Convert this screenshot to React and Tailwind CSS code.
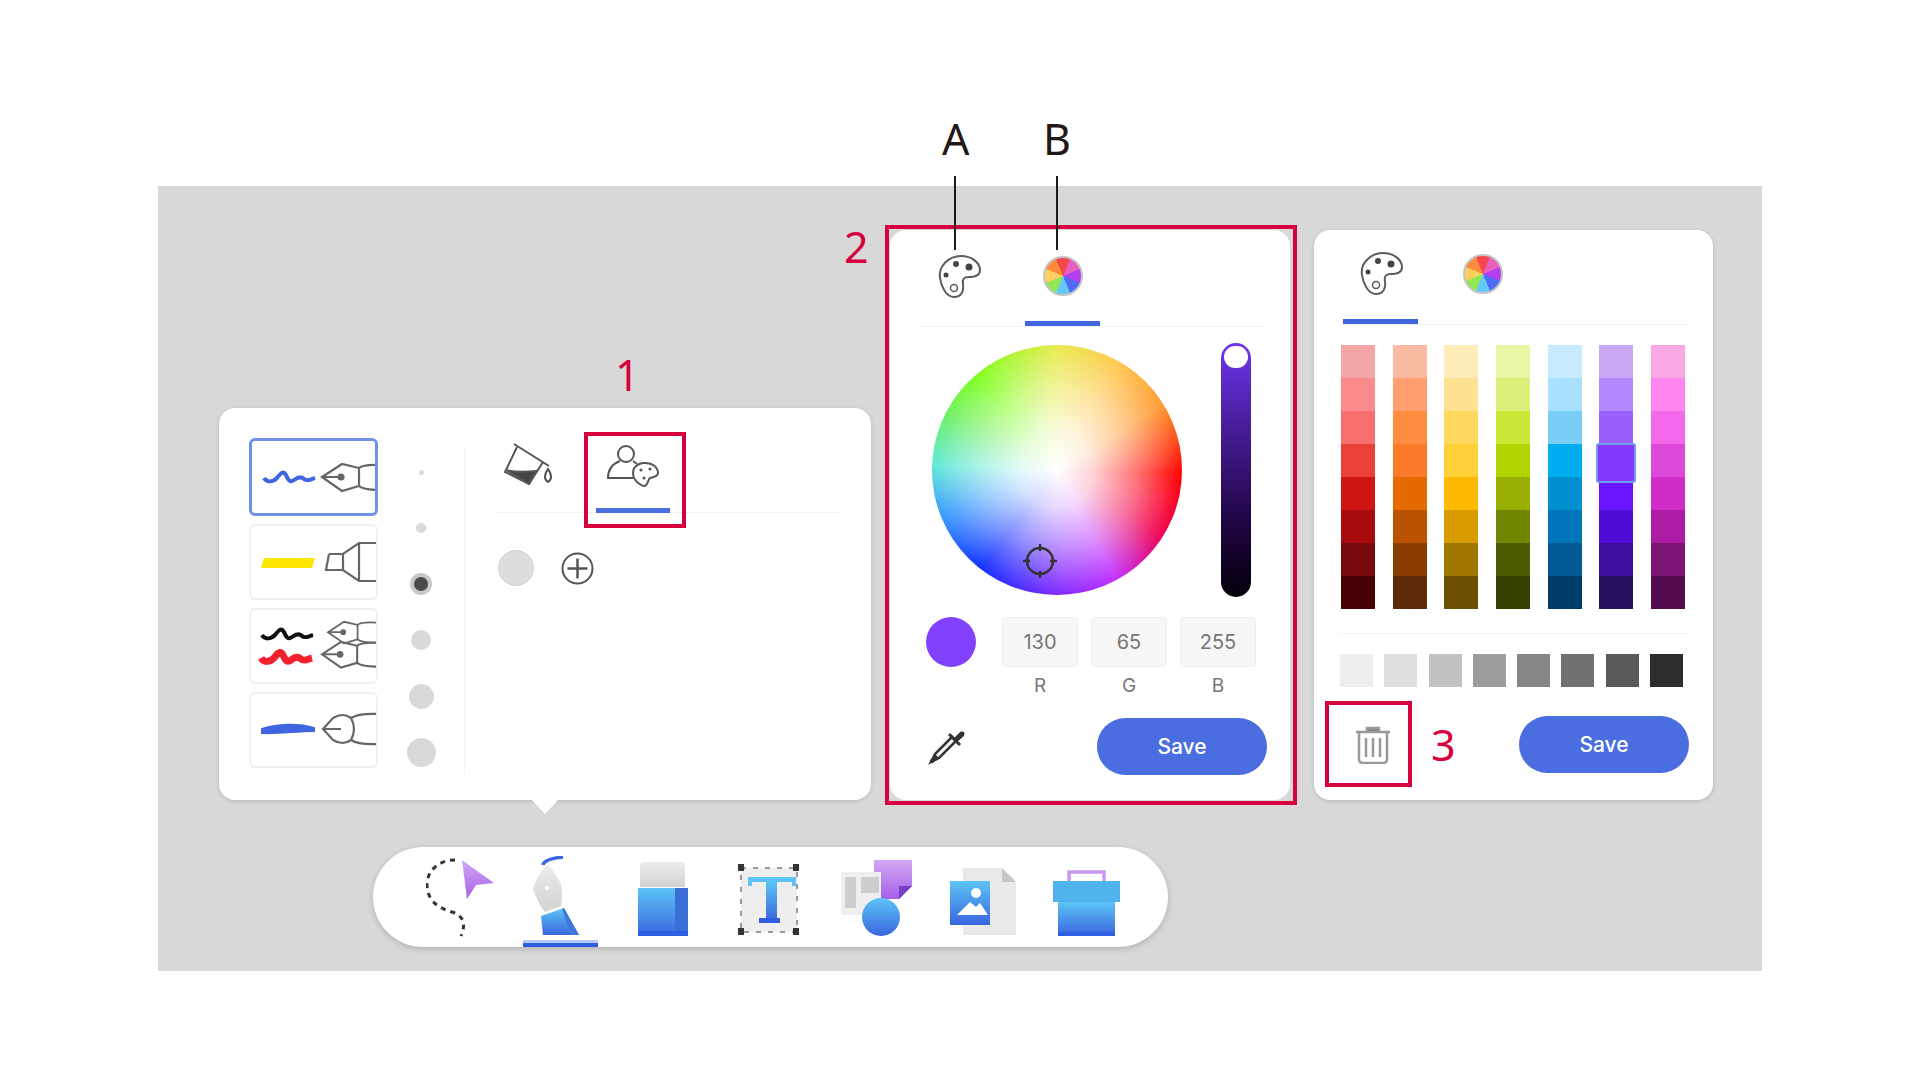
const swatches = [
  ['#f4a6a6', '#fb8a8a', '#f76f6f', '#ea4136', '#d01515', '#a80b0b', '#780a0e', '#470003'],
  ['#fbbba2', '#ff9f70', '#ff8c3f', '#fb7a2a', '#e56a00', '#bb5200', '#8a3c00', '#5f2a08'],
  ['#fdecb8', '#fee191', '#ffd860', '#ffd038', '#ffb900', '#d89c00', '#9f7700', '#6c5000'],
  ['#e8f7a3', '#dcef7a', '#cbe634', '#b2d400', '#98ae00', '#708600', '#4d5c00', '#343f00'],
  ['#c6ebff', '#a8e0ff', '#79cdf7', '#00adf0', '#0090d0', '#0074b8', '#005b94', '#003c68'],
  ['#c8a8f4', '#b388fc', '#9a60fc', '#8438fc', '#6a14ff', '#4f0cd8', '#3d0f9c', '#26105f'],
  ['#fba8e6', '#ff86f0', '#f468ec', '#dc48d8', '#d02cc8', '#ac1ca4', '#7c1474', '#540c50'],
];
const grays = ['#ededed', '#dfdfdf', '#c2c2c2', '#9d9d9d', '#868686', '#717171', '#5a5a5a', '#2d2d2d'];
const WAVE = 'M1 8 C4 13 10 12 14 8 C17 4 20 0 23 5 C25 10 27 13 31 10 C35 7 38 6 41 9 C44 12 48 9 52 8';

function Nib({ x = 0, y = 0, s = 1 }) {
  return (
    <g transform={`translate(${x} ${y}) scale(${s})`} fill="none" stroke="#666" strokeWidth="2.2">
      <path d="M0 14 L20 1 L37 5 V23 L20 28 Z" />
      <path d="M37 5 Q41 1 60 2 M37 23 Q41 27 60 27" />
      <path d="M0 14 H19" />
      <circle cx="19" cy="14" r="2.5" fill="#666" />
    </g>
  );
}

function PenCard({ selected, children }) {
  return (
    <div className={selected
      ? 'h-[78px] w-[129px] overflow-hidden rounded-md border-[3px] border-[#7090ec] bg-white'
      : 'h-[76px] w-[129px] overflow-hidden rounded-md border-2 border-[#f0f0f0] bg-white'}>
      {children}
    </div>
  );
}

function PaletteIcon() {
  return (
    <svg className="h-[44px] w-[44px]" viewBox="0 0 44 44" fill="none" stroke="#5c5c5c" strokeWidth="2">
      <path d="M3 24 C1 12 12 2 24 2 C35 2 43 9 43 16 C43 22 38 23 32 23 C27 23 25 25 26 30 C27 38 24 43 17 43 C9 43 4 32 3 24 Z" />
      <circle cx="19" cy="10" r="3" fill="#444" stroke="none" />
      <circle cx="32" cy="13" r="3.5" fill="#444" stroke="none" />
      <circle cx="9" cy="21" r="2.5" fill="#444" stroke="none" />
      <circle cx="17" cy="34" r="3.5" strokeWidth="1.5" />
    </svg>
  );
}

function WheelIcon() {
  return (
    <div className="h-[40px] w-[40px] rounded-full border-2 border-[#c4c4c4] bg-[image:conic-gradient(from_-22.5deg,#f4484c_0deg_45deg,#e85fc0_45deg_90deg,#b43ff0_90deg_135deg,#4f6cf5_135deg_180deg,#65c8f8_180deg_225deg,#90e850_225deg_270deg,#fcd060_270deg_315deg,#fc8a3c_315deg_360deg)]" />
  );
}

function SaveButton() {
  return (
    <button className="h-[57px] w-[170px] rounded-full bg-[#4a6ee0] font-['Inter',sans-serif] text-[21px] font-medium text-white">
      Save
    </button>
  );
}

function Rgb({ value, label }) {
  return (
    <div className="flex w-[76px] flex-col items-center">
      <div className="flex h-[50px] w-full items-center justify-center rounded-[4px] border border-[#eeeeee] bg-[#f6f6f6] font-['Inter',sans-serif] text-[20px] text-[#777777]">
        {value}
      </div>
      <span className="mt-[8px] font-['Inter',sans-serif] text-[19px] leading-[22px] text-[#777777]">{label}</span>
    </div>
  );
}

function Grad({ id, from, to }) {
  return (
    <linearGradient id={id} x1="0" y1="0" x2="0" y2="1">
      <stop offset="0" stopColor={from} />
      <stop offset="1" stopColor={to} />
    </linearGradient>
  );
}

function Toolbar() {
  return (
    <div className="relative ml-[154px] mt-[47px] flex h-[100px] w-[795px] shrink-0 items-start rounded-full bg-white pl-[53px] pt-[9px] shadow-[0_2px_6px_rgba(0,0,0,0.18)]">
      {/* lasso */}
      <svg className="h-[82px] w-[68px]" viewBox="0 0 68 82">
        <defs>
          <Grad id="purple" from="#d2a8f4" to="#a65fe8" />
          <Grad id="blue" from="#5cc4f5" to="#3a66e0" />
          <Grad id="gray" from="#ececec" to="#d2d2d2" />
        </defs>
        <path d="M29 4 C10 4 0 18 1 30 C2 45 12 52 26 56 C38 60 40 68 35 80" fill="none" stroke="#333" strokeWidth="3" strokeDasharray="5 5" />
        <path d="M36 4 L68 27 L50 29 L41 43 Z" fill="url(#purple)" />
      </svg>
      {/* pen */}
      <svg className="ml-[39px] h-[82px] w-[46px]" viewBox="0 0 46 82">
        <path d="M10 9 Q11 3 30 1" fill="none" stroke="#3a66e0" strokeWidth="3.5" />
        <path d="M14 8 Q4 20 0 32 Q4 46 12 56 L28 50 Q30 38 28 28 Q22 16 14 8 Z" fill="url(#gray)" />
        <circle cx="14" cy="32" r="2" fill="#fff" />
        <path d="M8 60 L31 52 L46 79 H10 Z" fill="url(#blue)" />
        <path d="M31 52 L46 79 H38 L29 53 Z" fill="#3f77dc" />
      </svg>
      {/* eraser */}
      <svg className="ml-[59px] h-[82px] w-[50px]" viewBox="0 0 50 82">
        <path d="M2 10 Q2 6 6 6 H43 Q47 6 47 10 V31 H2 Z" fill="url(#gray)" />
        <rect x="0" y="32" width="50" height="48" fill="url(#blue)" />
        <rect x="37" y="32" width="13" height="48" fill="#3a6fd8" />
        <rect x="0" y="75" width="50" height="5" fill="#2f5fe0" />
      </svg>
      {/* text */}
      <svg className="ml-[50px] h-[82px] w-[62px]" viewBox="0 0 62 82">
        <rect x="3" y="12" width="56" height="64" fill="#eeeeee" stroke="#9a9a9a" strokeWidth="2" strokeDasharray="5 7" />
        {[[0, 8], [55, 8], [0, 72], [55, 72]].map(([x, y]) => (
          <rect key={x + '-' + y} x={x} y={y} width="6" height="7" fill="#333" />
        ))}
        <path d="M10 21 H58 V30 H54 V26 H40 V26 H27 V26 H14 V30 H10 Z" fill="#5cc4f5" />
        <rect x="28" y="26" width="11" height="38" fill="url(#blue)" />
        <rect x="21" y="62" width="21" height="5" fill="#2f5fe0" />
      </svg>
      {/* shapes */}
      <svg className="ml-[41px] h-[82px] w-[71px]" viewBox="0 0 71 82">
        <path d="M33 4 H71 V30 L58 43 H33 Z" fill="url(#purple)" />
        <path d="M71 30 L58 43 V30 Z" fill="#7a3fc8" />
        <rect x="0" y="16" width="40" height="43" fill="#efefef" />
        <rect x="4" y="21" width="11" height="31" fill="#cdcdcd" />
        <rect x="20" y="21" width="18" height="16" fill="#cdcdcd" />
        <circle cx="40" cy="61" r="19" fill="url(#blue)" />
      </svg>
      {/* image */}
      <svg className="ml-[38px] h-[82px] w-[66px]" viewBox="0 0 66 82">
        <path d="M13 12 H52 L66 26 V79 H13 Z" fill="#e9e9e9" />
        <path d="M52 12 L66 26 H52 Z" fill="#c6c6c6" />
        <rect x="0" y="25" width="40" height="44" fill="url(#blue)" />
        <circle cx="26" cy="37" r="5" fill="#fff" />
        <path d="M7 59 L20 46 L26 51 L30 47 L38 59 Z" fill="#fff" />
      </svg>
      {/* toolbox */}
      <svg className="ml-[37px] h-[82px] w-[67px]" viewBox="0 0 67 82">
        <path d="M16 26 V16 H51 V26" fill="none" stroke="#c79bf2" strokeWidth="3.5" />
        <rect x="5" y="46" width="57" height="34" fill="url(#blue)" />
        <rect x="5" y="76" width="57" height="4" fill="#2f5fe0" />
        <rect x="0" y="25" width="67" height="21" fill="#4fb2ec" />
      </svg>
      <div className="absolute bottom-0 left-[150px] h-[7px] w-[75px] border-b-[4px] border-[#2f5fe0] bg-[#b9c9f5]" />
    </div>
  );
}

export default function App() {
  return (
    <div className="h-[1081px] w-[1921px] bg-white pl-[158px] pt-[186px] font-['Noto_Sans',sans-serif]">
      <div className="flex h-[785px] w-[1604px] items-start bg-[#d8d8d8] pl-[61px]">
        {/* pen panel + toolbar */}
        <div className="mt-[222px] flex w-[652px] shrink-0 flex-col">
          <div className="relative flex h-[392px] w-[652px] rounded-2xl bg-white shadow-[0_1px_4px_rgba(0,0,0,0.16)]">
            <div className="flex flex-col gap-[8px] pl-[30px] pt-[30px]">
              <PenCard selected>
                <svg className="-ml-[3px] -mt-[3px] h-[78px] w-[129px]" viewBox="0 0 129 78">
                  <path d={WAVE} transform="translate(14 32)" fill="none" stroke="#3f66e0" strokeWidth="4" />
                  <Nib x={73} y={25} />
                </svg>
              </PenCard>
              <PenCard>
                <svg className="-ml-[2px] -mt-[2px] h-[76px] w-[129px]" viewBox="0 0 129 76">
                  <path d="M15 34 H66 L63 44 H12 Z" fill="#ffe600" />
                  <g fill="none" stroke="#666" strokeWidth="2.2">
                    <path d="M80 30 L77 46 H94 L110 57 H129 M80 30 H94 L110 19 H129 M110 19 V57 M94 30 V46" />
                  </g>
                </svg>
              </PenCard>
              <PenCard>
                <svg className="-ml-[2px] -mt-[2px] h-[76px] w-[129px]" viewBox="0 0 129 76">
                  <path d={WAVE} transform="translate(12 19)" fill="none" stroke="#111" strokeWidth="4" />
                  <path d={WAVE} transform="translate(11 42)" fill="none" stroke="#f4202c" strokeWidth="7" />
                  <Nib x={79} y={13} s={0.8} />
                  <Nib x={73} y={33} s={0.95} />
                </svg>
              </PenCard>
              <PenCard>
                <svg className="-ml-[2px] -mt-[2px] h-[76px] w-[129px]" viewBox="0 0 129 76">
                  <path d="M13 37 C28 32 50 31 65 36 L65 39 C48 39 28 42 13 41 Z" fill="#3f66e0" stroke="#3f66e0" strokeWidth="2" />
                  <g fill="none" stroke="#666" strokeWidth="2.2">
                    <path d="M74 37 L84 26 Q94 20 102 26 Q108 37 102 48 Q94 54 84 48 Z" />
                    <path d="M102 26 Q110 21 129 22 M102 48 Q110 53 129 52 M74 37 H92" />
                  </g>
                </svg>
              </PenCard>
            </div>

            {/* sizes */}
            <div className="ml-[13px] flex w-[60px] flex-col pt-[36px]">
              {[5, 10, 0, 20, 25, 29].map((size, i) => (
                <div key={i} className="flex h-[56px] items-center justify-center">
                  {size === 0 ? (
                    <div className="flex h-[22px] w-[22px] items-center justify-center rounded-full bg-[#c8c8c8]">
                      <div className="h-[14px] w-[14px] rounded-full bg-[#4a4a4a]" />
                    </div>
                  ) : (
                    <div className="rounded-full bg-[#d9d9d9]" style={{ width: size, height: size }} />
                  )}
                </div>
              ))}
            </div>

            <div className="ml-[13px] mt-[40px] h-[327px] w-px bg-[#f2f2f2]" />

            <div className="ml-[30px] flex w-[345px] flex-col">
              <div className="flex h-[105px] gap-[33px] border-b border-[#f0f0f0]">
                <div className="flex h-[105px] w-[68px] justify-center pt-[35px]">
                  <svg className="h-[42px] w-[54px]" viewBox="0 0 54 42" fill="none" stroke="#555" strokeWidth="2">
                    <path d="M12 1 L47 23" />
                    <path d="M15 4 L3 29 L27 41 L41 19" />
                    <path d="M4 27 Q16 30 34 28 L27 41 Z" fill="#444" />
                    <path d="M47 26 Q41 35 47 39 Q53 35 47 26 Z" transform="translate(-1 0)" />
                  </svg>
                </div>
                <div className="flex h-[105px] w-[74px] justify-center border-b-[5px] border-[#4a6ee0] pt-[37px]">
                  <svg className="h-[42px] w-[52px]" viewBox="0 0 52 42" fill="none" stroke="#555" strokeWidth="2">
                    <ellipse cx="19" cy="9" rx="8" ry="8" />
                    <path d="M13 16 C5 19 1 24 1 33 H26" />
                    <path d="M26 16 L30 19" />
                    <path d="M30 37 C24 31 24 20 36 18 C46 17 51 23 51 28 C51 32 46 32 43 33 C41 34 41 41 37 41 C34 41 33 39 30 37 Z" />
                    <circle cx="34" cy="25" r="1.6" fill="#555" stroke="none" />
                    <circle cx="43" cy="24" r="1.6" fill="#555" stroke="none" />
                    <circle cx="37" cy="33" r="1.6" fill="#555" stroke="none" />
                  </svg>
                </div>
              </div>
              <div className="ml-[3px] mt-[37px] flex items-center gap-[27px]">
                <div className="h-[36px] w-[36px] rounded-full border border-[#d0d0d0] bg-[#dddddd]" />
                <svg className="h-[33px] w-[33px]" viewBox="0 0 33 33" fill="none" stroke="#555" strokeWidth="2">
                  <circle cx="16.5" cy="16.5" r="15" />
                  <path d="M16.5 6.5 V26.5 M6.5 16.5 H26.5" strokeWidth="2.5" />
                </svg>
              </div>
            </div>

            {/* callout arrow */}
            <div className="absolute -bottom-[14px] left-[312px] h-0 w-0 border-x-[14px] border-t-[15px] border-x-transparent border-t-white" />
            {/* annotation 1 */}
            <div className="absolute left-[365px] top-[24px] h-[96px] w-[102px] border-[4px] border-[#d7003f]" />
            <span className="absolute -top-[55px] left-[396px] text-[43px] leading-none text-[#d7003f]">1</span>
          </div>
          <Toolbar />
        </div>

        {/* colour wheel panel */}
        <div className="relative ml-[19px] mt-[44px] flex h-[570px] w-[400px] shrink-0 flex-col rounded-2xl bg-white">
          <div className="ml-[31px] mr-[23px] flex h-[97px] gap-[29px] border-b border-[#f2f2f2]">
            <div className="flex h-[96px] w-[75px] justify-center pt-[24px]"><PaletteIcon /></div>
            <div className="flex h-[96px] w-[75px] justify-center border-b-[5px] border-[#3f66e0] pt-[26px]"><WheelIcon /></div>
          </div>
          <div className="mt-[16px] flex items-start pl-[42px]">
            <div className="mt-[2px] h-[250px] w-[250px] rounded-full bg-[image:radial-gradient(closest-side,#ffffff_0%,#ffffffd0_30%,#ffffff70_65%,#ffffff00_100%),conic-gradient(#eaea50_0deg,#ffc850_30deg,#ff9a30_58deg,#ff0000_92deg,#f00050_122deg,#c030ff_152deg,#7a28ff_182deg,#1030ff_218deg,#3898ff_248deg,#60e8d8_272deg,#70f060_298deg,#80ff20_320deg,#eaea50_360deg)]">
              <svg className="ml-[90px] mt-[198px] h-[36px] w-[36px]" viewBox="0 0 36 36" fill="none" stroke="#333" strokeWidth="2.5">
                <circle cx="18" cy="18" r="13" />
                <path d="M18 1 V8 M18 28 V35 M1 18 H8 M28 18 H35" />
              </svg>
            </div>
            <div className="ml-[39px] flex h-[254px] w-[30px] justify-center rounded-full bg-gradient-to-b from-[#6e35f0] to-[#05000a] pt-[3px]">
              <div className="h-[22px] w-[24px] rounded-full bg-white" />
            </div>
          </div>
          <div className="mt-[20px] flex items-start pl-[36px]">
            <div className="h-[50px] w-[50px] rounded-full bg-[#8241ff]" />
            <div className="ml-[26px] flex gap-[13px]">
              <Rgb value="130" label="R" />
              <Rgb value="65" label="G" />
              <Rgb value="255" label="B" />
            </div>
          </div>
          <div className="mt-[21px] flex items-center justify-between pl-[38px] pr-[23px]">
            <svg className="h-[36px] w-[37px]" viewBox="0 0 37 36" fill="none" stroke="#333" strokeWidth="2.5">
              <path d="M24 8 L7 25 L3 33 L11 29 L28 12 Z" />
              <path d="M3 33 L9 27" strokeWidth="4" />
              <path d="M21 5 L32 16" strokeWidth="3" />
              <path d="M27 10 L32 5 Q34 3 35 4 Q36 6 33 8 L28 12 Z" fill="#333" />
            </svg>
            <SaveButton />
          </div>

          {/* annotation 2 and A / B leaders */}
          <div className="absolute -bottom-[5px] -left-[5px] -right-[7px] -top-[5px] border-[4px] border-[#d7003f]" />
          <span className="absolute -left-[46px] -top-[5px] text-[43px] leading-none text-[#d7003f]">2</span>
          <span className="absolute -top-[113px] left-[52px] text-[43px] leading-none text-[#231815]">A</span>
          <span className="absolute -top-[113px] left-[153px] text-[43px] leading-none text-[#231815]">B</span>
          <div className="absolute -top-[54px] left-[64px] h-[74px] w-[2px] bg-[#231815]" />
          <div className="absolute -top-[54px] left-[166px] h-[74px] w-[2px] bg-[#231815]" />
        </div>

        {/* swatch panel */}
        <div className="relative ml-[24px] mt-[44px] flex h-[570px] w-[399px] shrink-0 flex-col rounded-2xl bg-white px-[26px] shadow-[0_1px_4px_rgba(0,0,0,0.16)]">
          <div className="flex h-[95px] w-[348px] gap-[27px] border-b border-[#f2f2f2]">
            <div className="ml-[3px] flex h-[94px] w-[75px] justify-center border-b-[5px] border-[#3f66e0] pt-[21px]"><PaletteIcon /></div>
            <div className="flex h-[94px] w-[75px] justify-center pt-[24px]"><WheelIcon /></div>
          </div>
          <div className="ml-px mt-[20px] flex w-[344px] justify-between">
            {swatches.map((col, c) => (
              <div key={c} className="flex w-[34px] flex-col">
                {col.map((color, r) => (
                  <div key={color} className="relative h-[33px]" style={{ backgroundColor: color }}>
                    {c === 5 && r === 3 && (
                      <div className="absolute -bottom-[6px] -left-[3px] -right-[3px] -top-px z-10 rounded-[3px] border-2 border-[#6f9fe8] bg-[#8438fc]" />
                    )}
                  </div>
                ))}
              </div>
            ))}
          </div>
          <div className="mt-[24px] h-px w-[347px] bg-[#f2f2f2]" />
          <div className="mt-[20px] flex w-[343px] justify-between">
            {grays.map(color => (
              <div key={color} className="h-[33px] w-[33px]" style={{ backgroundColor: color }} />
            ))}
          </div>
          <div className="mt-[29px] flex w-[349px] items-center justify-between pl-[15px]">
            <svg className="h-[38px] w-[36px]" viewBox="0 0 36 38" fill="none" stroke="#999" strokeWidth="2.5">
              <path d="M1 6 H35" />
              <path d="M12 5 V2 H24 V5" fill="#888" />
              <path d="M4 7 V33 Q4 37 8 37 H28 Q32 37 32 33 V7" />
              <path d="M11 12 V31 M18 12 V31 M25 12 V31" />
            </svg>
            <SaveButton />
          </div>

          {/* annotation 3 */}
          <div className="absolute left-[11px] top-[471px] h-[86px] w-[87px] border-[4px] border-[#d7003f]" />
          <span className="absolute left-[117px] top-[493px] text-[43px] leading-none text-[#d7003f]">3</span>
        </div>
      </div>
    </div>
  );
}
